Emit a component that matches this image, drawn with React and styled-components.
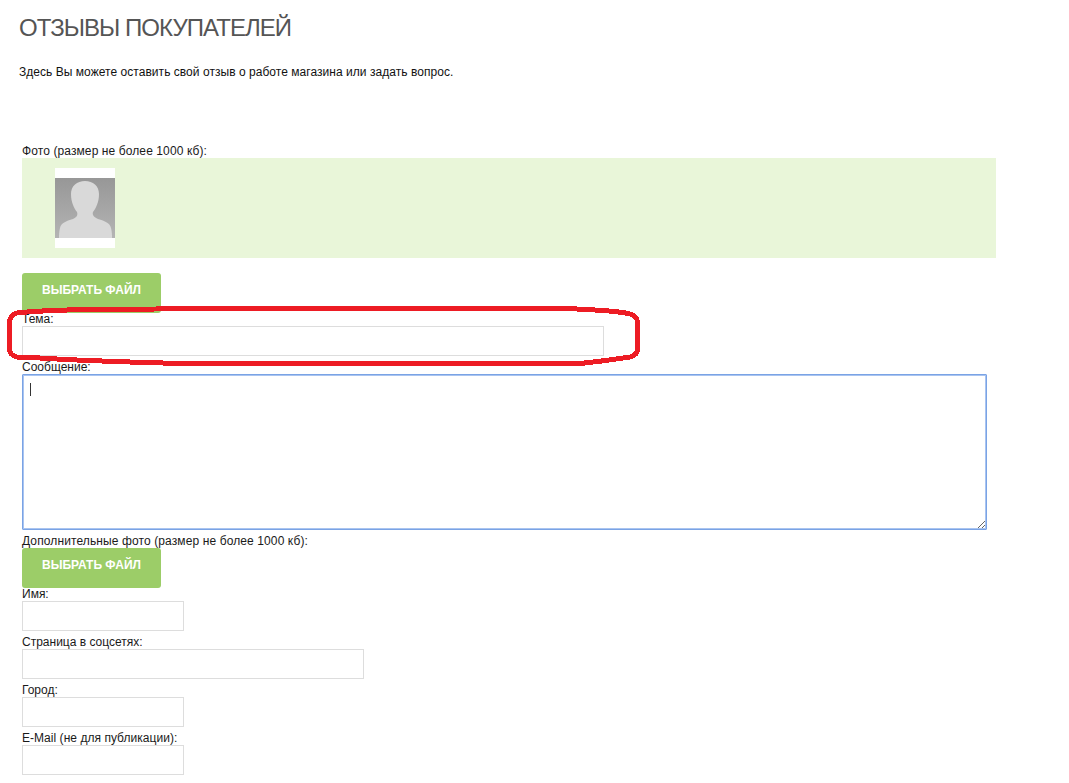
import styled, { createGlobalStyle } from "styled-components";

const GlobalStyle = createGlobalStyle`
  html, body {
    margin: 0;
    padding: 0;
    background: #fff;
    overflow: hidden;
  }
  body {
    font-family: "Liberation Sans", Arial, sans-serif;
    font-size: 12px;
    color: #1a1a1a;
  }
`;

function Avatar() {
  return (
    <svg width="60" height="60" viewBox="0 0 60 60" style={{ display: "block" }}>
      <defs>
        <linearGradient id="avatarBg" x1="0" y1="0" x2="0" y2="1">
          <stop offset="0" stopColor="#979797" />
          <stop offset="1" stopColor="#b4b4b4" />
        </linearGradient>
      </defs>
      <rect width="60" height="60" fill="url(#avatarBg)" />
      <path
        d="M30 3C38 3 44 8 44 16C44 24 41 30 38 34C37 37 39 39 43 41C50 43 55 45 56 50C57 54 57 57 57 60L4 60C4 57 4 54 5 50C6 45 11 43 18 41C22 39 23 37 22 34C19 30 16 24 16 16C16 8 22 3 30 3Z"
        fill="#d9d9d9"
      />
    </svg>
  );
}

export default function App() {
  return (
    <>
      <GlobalStyle />
      <Page>
        <Title>ОТЗЫВЫ ПОКУПАТЕЛЕЙ</Title>
        <Intro>Здесь Вы можете оставить свой отзыв о работе магазина или задать вопрос.</Intro>
        <Form>
          <Label $spread={0.1}>Фото (размер не более 1000 кб):</Label>
          <PhotoPanel>
            <PhotoFrame>
              <Avatar />
            </PhotoFrame>
          </PhotoPanel>
          <FileButton type="button" $top={15}>Выбрать файл</FileButton>
          <Label>Тема:</Label>
          <TextInput $width={582} />
          <Label>Сообщение:</Label>
          <MessageBox>
            <MessageArea />
            <Caret />
          </MessageBox>
          <Label $spread={0.11}>Дополнительные фото (размер не более 1000 кб):</Label>
          <FileButton type="button">Выбрать файл</FileButton>
          <Label>Имя:</Label>
          <TextInput $width={162} />
          <Label>Страница в соцсетях:</Label>
          <TextInput $width={342} />
          <Label>Город:</Label>
          <TextInput $width={162} />
          <Label $spread={0.04}>E-Mail (не для публикации):</Label>
          <TextInput $width={162} />
        </Form>
        <Marker viewBox="0 0 1069 783" width="1069" height="783">
          <path
            d="M9.5 335L9.5 322Q10 315 17 313C30 311.5 50 310.5 67 310L200 308.5L565 308.5C590 309.5 620 311 630 314Q637 316 637.5 322L637.5 350Q637 355 630 357C610 360 595 362 580 363.5L200 364C120 362 70 360 40 358L17 357Q10 355 9.5 350Z"
            fill="none"
            stroke="#ed1c24"
            strokeWidth="5"
            shapeRendering="crispEdges"
          />
        </Marker>
      </Page>
    </>
  );
}

const Page = styled.div`
  position: relative;
  height: 783px;
  padding: 13px 0 0 19px;
  box-sizing: border-box;
`;

const Title = styled.h1`
  margin: 0;
  font-size: 24px;
  line-height: 30px;
  font-weight: 400;
  color: #555;
  letter-spacing: -0.95px;
`;

const Intro = styled.p`
  margin: 22px 0 0;
  line-height: 14px;
  letter-spacing: 0.04px;
  color: #111;
`;

const Form = styled.form`
  display: flex;
  flex-direction: column;
  align-items: flex-start;
  margin: 66px 0 0 3px;
`;

const Label = styled.label`
  display: block;
  height: 13px;
  line-height: 13px;
  letter-spacing: ${({ $spread }) => $spread || 0}px;
  white-space: nowrap;
`;

const PhotoPanel = styled.div`
  width: 974px;
  height: 100px;
  padding: 10px 0 0 33px;
  box-sizing: border-box;
  background: #e9f6d9;
`;

const PhotoFrame = styled.div`
  width: 60px;
  padding: 10px 0;
  background: #fff;
`;

const FileButton = styled.button`
  width: 139px;
  height: 40px;
  margin-top: ${({ $top }) => $top || 0}px;
  padding: 0 0 6px;
  border: none;
  border-radius: 3px;
  background: #9ccd68;
  color: #fff;
  font-family: inherit;
  font-size: 12px;
  font-weight: 700;
  text-transform: uppercase;
`;

const TextInput = styled.input`
  display: block;
  width: ${({ $width }) => $width}px;
  height: 30px;
  margin-bottom: 5px;
  padding: 0 6px;
  box-sizing: border-box;
  border: 1px solid #ddd;
  background: #fff;
  outline: none;
`;

const MessageBox = styled.div`
  position: relative;
  width: 965px;
  height: 156px;
  margin-bottom: 5px;
`;

const MessageArea = styled.textarea`
  display: block;
  width: 100%;
  height: 100%;
  box-sizing: border-box;
  border: 1px solid #7aa3e5;
  border-radius: 1px;
  box-shadow: inset 0 0 0 1px #a9c4f0;
  background: #fff;
  outline: none;
  resize: both;
`;

const Caret = styled.span`
  position: absolute;
  left: 8px;
  top: 9px;
  width: 1px;
  height: 13px;
  background: #333;
`;

const Marker = styled.svg`
  position: absolute;
  left: 0;
  top: 0;
  pointer-events: none;
`;
